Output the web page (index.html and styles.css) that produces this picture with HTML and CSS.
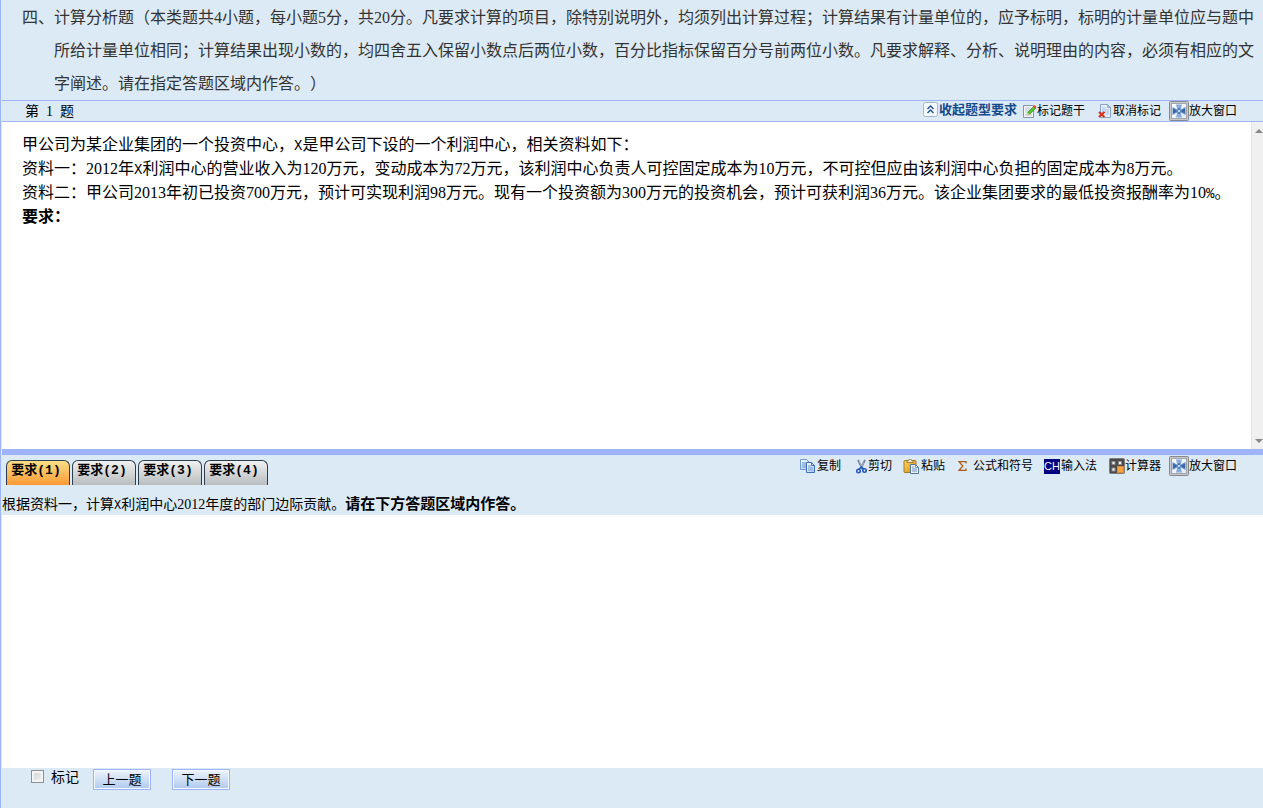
FILE: index.html
```
<!DOCTYPE html>
<html lang="zh-CN">
<head>
<meta charset="utf-8">
<title>计算分析题</title>
<link rel="stylesheet" href="styles.css">
</head>
<body>
<svg class="defs" aria-hidden="true">
  <defs>
    <linearGradient id="frame" x1="0" y1="0" x2="1" y2="1"><stop offset="0" stop-color="#fff"/><stop offset="1" stop-color="#dfe8f2"/></linearGradient>
    <linearGradient id="gold" x1="0" y1="0" x2="1" y2="1"><stop offset="0" stop-color="#ffd75e"/><stop offset="1" stop-color="#d18a10"/></linearGradient>
    <linearGradient id="sheet" x1="0" y1="0" x2="1" y2="1"><stop offset="0" stop-color="#fff"/><stop offset="1" stop-color="#a9c8f2"/></linearGradient>
    <symbol id="expand" viewBox="0 0 20 20">
      <rect x=".5" y=".5" width="19" height="19" rx="1" fill="#c6c8cc" stroke="#85888d"/>
      <rect x="2.500" y="2.500" width="15" height="15" fill="url(#frame)" stroke="#a2a6ac"/>
      <path d="M7 3.500h6L12 7.500h-4zM7 16.500h6l-1-4H8z" fill="#86abdc"/>
      <path d="M3.500 6l4.500 2.500h4L16.500 6v8L12 11.500H8L3.500 14z" fill="#5f8dcb"/>
      <path d="M4 7.500l4 2.500-4 2.500zM16 7.500L12 10l4 2.500z" fill="#39669f"/>
      <path d="M8.500 7h3v6h-3z" fill="#5280bd"/>
      <path d="M9 9h2v2H9z" fill="#c3d9f3"/>
    </symbol>
  </defs>
</svg>
<main class="exam">
  <p class="intro">四、计算分析题（本类题共4小题，每小题5分，共20分。凡要求计算的项目，除特别说明外，均须列出计算过程；计算结果有计量单位的，应予标明，标明的计量单位应与题中所给计量单位相同；计算结果出现小数的，均四舍五入保留小数点后两位小数，百分比指标保留百分号前两位小数。凡要求解释、分析、说明理由的内容，必须有相应的文字阐述。请在指定答题区域内作答。）</p>

  <header class="bar">
    <h1 class="number"><span>第</span><span>1</span><span>题</span></h1>
    <div class="tools">
      <button type="button" class="tool collapse"><svg width="15" height="15" viewBox="0 0 15 15"><rect x=".5" y=".5" width="14" height="14" rx="2" fill="#f4f9fd" stroke="#a4b7c9"/><path d="M4.500 7l3-3 3 3M4.500 11l3-3 3 3" fill="none" stroke="#1d4f8c" stroke-width="1.400"/></svg>收起题型要求</button>
      <button type="button" class="tool mark"><svg width="14" height="14" viewBox="0 0 14 14"><path d="M.5 1.500h10v12H.5z" fill="#f5f8fc" stroke="#8293ad"/><path d="M2 4h6M2 6h5M2 8h3M2 11h7" stroke="#b7c4d8"/><path d="M4 11l1-3 6-6 2 2-6 6z" fill="#57c22e" stroke="#2f8a1c" stroke-width=".6"/><path d="M10 2.500L11.500 1l2 2L12 4.500z" fill="#e4472b"/><path d="M3.500 11.500l1-3 2 2z" fill="#f0c990"/></svg>标记题干</button>
      <button type="button" class="tool unmark"><svg width="15" height="14" viewBox="0 0 15 14"><path d="M2.500.5h7l3 3v10h-10z" fill="#e6effc" stroke="#8ba4cc"/><path d="M9.500.5v3h3z" fill="#a9c0e4" stroke="#7893c0" stroke-width=".6"/><path d="M4 4h4M4 6h7M4 8h7M8 10h3" stroke="#a8c0e6"/><path d="M1 8l5.500 5M6.500 8L1 13" stroke="#d7331d" stroke-width="2.200"/></svg>取消标记</button>
      <button type="button" class="tool zoom"><svg width="20" height="20"><use href="#expand"/></svg>放大窗口</button>
    </div>
  </header>

  <section class="question">
    <div class="material">
      <p>甲公司为某企业集团的一个投资中心，<span class="half">X</span>是甲公司下设的一个利润中心，相关资料如下：</p>
      <p>资料一：2012年<span class="half">X</span>利润中心的营业收入为120万元，变动成本为72万元，该利润中心负责人可控固定成本为10万元，不可控但应由该利润中心负担的固定成本为8万元。</p>
      <p>资料二：甲公司2013年初已投资700万元，预计可实现利润98万元。现有一个投资额为300万元的投资机会，预计可获利润36万元。该企业集团要求的最低投资报酬率为10<span class="half">%</span>。</p>
      <p><strong>要求：</strong></p>
    </div>
    <div class="scroll" aria-hidden="true">
      <svg width="8" height="4" viewBox="0 0 8 4"><path d="M0 4l4-4 4 4z" fill="#868686"/></svg>
      <svg width="8" height="4" viewBox="0 0 8 4"><path d="M0 0l4 4 4-4z" fill="#868686"/></svg>
    </div>
  </section>

  <section class="answer">
    <div class="answer-head">
      <nav class="tabs">
        <button type="button" class="tab active">要求(1)</button>
        <button type="button" class="tab">要求(2)</button>
        <button type="button" class="tab">要求(3)</button>
        <button type="button" class="tab">要求(4)</button>
      </nav>
      <div class="tools">
        <button type="button" class="tool copy"><svg width="16" height="14" viewBox="0 0 16 14"><path d="M.5.5h6l3 3v7h-9z" fill="url(#sheet)" stroke="#6e9ad6"/><path d="M2 4h4M2 6h4M2 8h4" stroke="#5f91d5"/><path d="M6.500 3.500h5l3 3v7h-8z" fill="url(#sheet)" stroke="#3f70b8"/><path d="M11.500 3.500v3h3" fill="none" stroke="#3f70b8"/><path d="M8 7h3M8 9h5M8 11h5" stroke="#6d9bd9"/></svg>复制</button>
        <button type="button" class="tool cut"><svg width="11" height="15" viewBox="0 0 11 15"><path d="M2 1l4.500 9M9 1L4.500 10" stroke="#6b7f99" stroke-width="1.800"/><path d="M3 2l3 6M8 3L5 9" stroke="#b8c9dd" stroke-width=".7"/><circle cx="2.500" cy="12" r="1.700" fill="none" stroke="#2259ba" stroke-width="1.600"/><circle cx="8.500" cy="11.500" r="1.700" fill="none" stroke="#2259ba" stroke-width="1.600"/><path d="M3 10l2.500-2L8 10" fill="none" stroke="#2259ba" stroke-width="1.600"/></svg>剪切</button>
        <button type="button" class="tool paste"><svg width="17" height="15" viewBox="0 0 17 15"><rect x="1" y="1.500" width="12" height="12" rx="1" fill="url(#gold)" stroke="#a87824"/><path d="M4 3.500V1.500h1.500a1.500 1.500 0 0 1 3 0H10v2z" fill="#f3ead2" stroke="#8c6a2c" stroke-width=".8"/><path d="M7.500 5.500h5l3 3v6h-8z" fill="#edf3fb" stroke="#52739d"/><path d="M12.500 5.500v3h3M9 8h2M9 10h5M9 12h5" fill="none" stroke="#7695bd"/></svg>粘贴</button>
        <button type="button" class="tool symbols"><svg width="9" height="10" viewBox="0 0 9 10"><path d="M8 2.500V.7H1L4.800 5 1 9.300h7V7.500" fill="none" stroke="#ad5b16" stroke-width="1.300"/></svg>公式和符号</button>
        <button type="button" class="tool ime"><span class="ch">CH</span>输入法</button>
        <button type="button" class="tool calc"><svg width="16" height="16" viewBox="0 0 16 16"><rect x=".5" y=".5" width="15" height="15" rx="1" fill="#4a4a4a" stroke="#7d7d7d"/><path d="M2.500 3h4v4h-4zM9 3h4v4H9zM2.500 9.500h4v4h-4z" fill="#8a8a8a"/><path d="M3.500 4h2v2h-2zM10 4h2v2h-2zM3.500 10.500h2v2h-2z" fill="#f5f5f5"/><rect x="8" y="8" width="7" height="7" fill="#e98a22"/><rect x="9" y="9" width="5" height="5" fill="#f7a23e"/></svg>计算器</button>
        <button type="button" class="tool zoom"><svg width="20" height="20"><use href="#expand"/></svg>放大窗口</button>
      </div>
    </div>
    <label class="task" for="reply">根据资料一，计算<span class="half">X</span>利润中心2012年度的部门边际贡献。<strong>请在下方答题区域内作答。</strong></label>
    <textarea id="reply" class="reply"></textarea>
  </section>

  <footer class="footer">
    <input type="checkbox" id="flag" class="check">
    <label for="flag" class="flag">标记</label>
    <button type="button" class="step">上一题</button>
    <button type="button" class="step">下一题</button>
  </footer>
</main>
</body>
</html>
```
FILE: styles.css
```
* { box-sizing: border-box; }

body {
  margin: 0;
  background: #dceaf5;
  color: #000;
  font-family: "Liberation Serif", "Noto Sans CJK SC", sans-serif;
  text-spacing-trim: space-all;
}

p, h1 { margin: 0; }
.defs { position: absolute; width: 0; height: 0; }
button { font-family: inherit; color: inherit; padding: 0; cursor: pointer; }

.exam {
  display: flex;
  flex-direction: column;
  min-height: 100vh;
  border-left: 1px solid #9fb4f8;
  padding-left: 1px;
}

.intro {
  padding: 1px 8px 0 52px;
  text-indent: -32px;
  font-size: 16px;
  line-height: 33px;
  color: #333;
}

.bar {
  display: flex;
  justify-content: space-between;
  height: 22px;
  border: solid #9fb4f8;
  border-width: 1px 0;
}

.number {
  display: flex;
  gap: 7px;
  padding-left: 23px;
  font-size: 14px;
  font-weight: 400;
  line-height: 22px;
}

.tools {
  display: flex;
  align-items: center;
  height: 20px;
  padding-right: 26px;
  font-size: 12px;
}

.answer-head .tools { height: 22px; }

.tool {
  display: flex;
  align-items: center;
  height: 20px;
  border: 0;
  background: none;
  font-size: 12px;
  line-height: 20px;
  white-space: nowrap;
}

.tool svg { flex: none; }
.collapse { gap: 1px; margin-right: 6px; padding-bottom: 3px; font-size: 13px; font-weight: 700; color: #15498b; }
.mark { margin-right: 13px; }
.unmark { margin-right: 8px; }

.question {
  display: flex;
  flex: 327 0 0;
  background: #fff;
}

.material {
  flex: 1;
  padding: 11px 8px 11px 20px;
  font-size: 16px;
  line-height: 24px;
}

.half { font-family: "Liberation Mono", monospace; font-size: 14px; line-height: 1; }
.task .half { font-size: 12px; }

.scroll {
  display: flex;
  flex-direction: column;
  justify-content: space-between;
  align-items: flex-end;
  width: 12px;
  padding: 7px 0 6px;
  overflow: hidden;
  background: #f0f0f0;
  border-left: 1px solid #e3e3e3;
}

.answer {
  display: flex;
  flex: 313 0 0;
  flex-direction: column;
  border-top: 6px solid #9fb4f8;
}

.answer-head {
  display: flex;
  justify-content: space-between;
  height: 30px;
}

.tabs { display: flex; align-items: flex-end; gap: 2px; padding-left: 4px; }

.tab {
  width: 64px;
  height: 25px;
  padding: 0 4px 4px 0;
  border: 1px solid #2c3e50;
  border-bottom: 0;
  border-radius: 6px 6px 0 0;
  background: linear-gradient(#f0f0f0, #b9bdbf);
  font-family: "Liberation Mono", "Noto Sans CJK SC", monospace;
  font-size: 13px;
  font-weight: 700;
  line-height: 18px;
}

.tab.active { background: linear-gradient(#f8df86, #ff9a35); }

.copy { gap: 1px; margin-right: 15px; }
.cut { gap: 1px; margin-right: 11px; }
.paste { gap: 1px; margin-right: 13px; }
.symbols { gap: 6px; margin-right: 11px; }
.ime { gap: 1px; margin-right: 12px; }
.calc { margin-right: 8px; }

.ch {
  width: 16px;
  height: 15px;
  background: #000080;
  color: #fff;
  font-family: "Liberation Sans", sans-serif;
  font-size: 11px;
  line-height: 15px;
  text-align: center;
}

.task {
  height: 30px;
  padding-top: 10px;
  font-size: 14px;
  line-height: 20px;
}

.task strong { font-size: 15px; line-height: 1; }

.reply {
  display: block;
  flex: 1;
  width: 100%;
  min-height: 0;
  border: 0;
  padding: 4px;
  resize: none;
  outline: none;
  background: #fff;
  font: inherit;
}

.footer {
  display: flex;
  align-items: flex-start;
  height: 40px;
  padding-left: 29px;
}

.check {
  appearance: none;
  width: 13px;
  height: 13px;
  margin: 2px 7px 0 0;
  border: 1px solid #8e8f8f;
  background: linear-gradient(135deg, #cbcfd5, #f6f6f6);
  box-shadow: inset 0 0 0 2px #f4f4f4;
}

.check:checked { background: #4a6a9a; }
.flag { margin-right: 14px; font-size: 14px; line-height: 20px; }

.step {
  width: 58px;
  height: 21px;
  margin: 1px 21px 0 0;
  border: 1px solid #9fb4f8;
  background: linear-gradient(#eef4fd, #b0c9ee);
  box-shadow: inset 0 0 0 1px #f4f8ff;
  font-size: 13px;
  line-height: 17px;
}
```
